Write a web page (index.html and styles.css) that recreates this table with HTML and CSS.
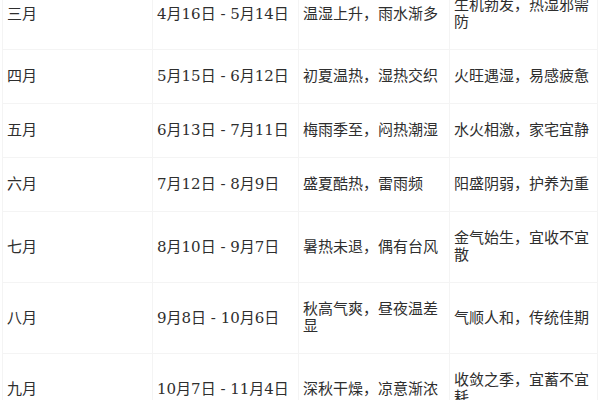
FILE: index.html
```html
<!DOCTYPE html>
<html lang="zh">
<head>
<meta charset="utf-8">
<link rel="stylesheet" href="styles.css">
</head>
<body>
<table class="months">
  <colgroup>
    <col class="c1"><col class="c2"><col class="c3"><col class="c4">
  </colgroup>
  <tbody>
    <tr class="two"><td>三月</td><td>4月16日 - 5月14日</td><td>温湿上升，雨水渐多</td><td>生机勃发，热湿邪需防</td></tr>
    <tr class="one"><td>四月</td><td>5月15日 - 6月12日</td><td>初夏温热，湿热交织</td><td>火旺遇湿，易感疲惫</td></tr>
    <tr class="one"><td>五月</td><td>6月13日 - 7月11日</td><td>梅雨季至，闷热潮湿</td><td>水火相激，家宅宜静</td></tr>
    <tr class="one"><td>六月</td><td>7月12日 - 8月9日</td><td>盛夏酷热，雷雨频</td><td>阳盛阴弱，护养为重</td></tr>
    <tr class="two"><td>七月</td><td>8月10日 - 9月7日</td><td>暑热未退，偶有台风</td><td>金气始生，宜收不宜散</td></tr>
    <tr class="two"><td>八月</td><td>9月8日 - 10月6日</td><td>秋高气爽，昼夜温差显</td><td>气顺人和，传统佳期</td></tr>
    <tr class="two"><td>九月</td><td>10月7日 - 11月4日</td><td>深秋干燥，凉意渐浓</td><td>收敛之季，宜蓄不宜耗</td></tr>
  </tbody>
</table>
</body>
</html>
```
FILE: styles.css
```css
html, body {
  margin: 0;
  padding: 0;
  background: #ffffff;
}
body {
  padding: 0 2px;
  overflow: hidden;
  height: 400px;
}
.months {
  margin-top: -22px;
  width: 595px;
  table-layout: fixed;
  border-collapse: collapse;
  font-family: "DejaVu Serif", "Noto Sans CJK SC", serif;
  font-size: 15px;
  line-height: 17px;
  color: #2e2e2e;
}
.c1 { width: 150px; }
.c2 { width: 146px; }
.c3 { width: 151px; }
.c4 { width: 148px; }
.months tr.one { height: 54px; }
.months tr.two { height: 71px; }
.months td {
  border: 1px solid #f4f4f4;
  padding: 0 4px;
  vertical-align: middle;
  text-align: left;
}
```
